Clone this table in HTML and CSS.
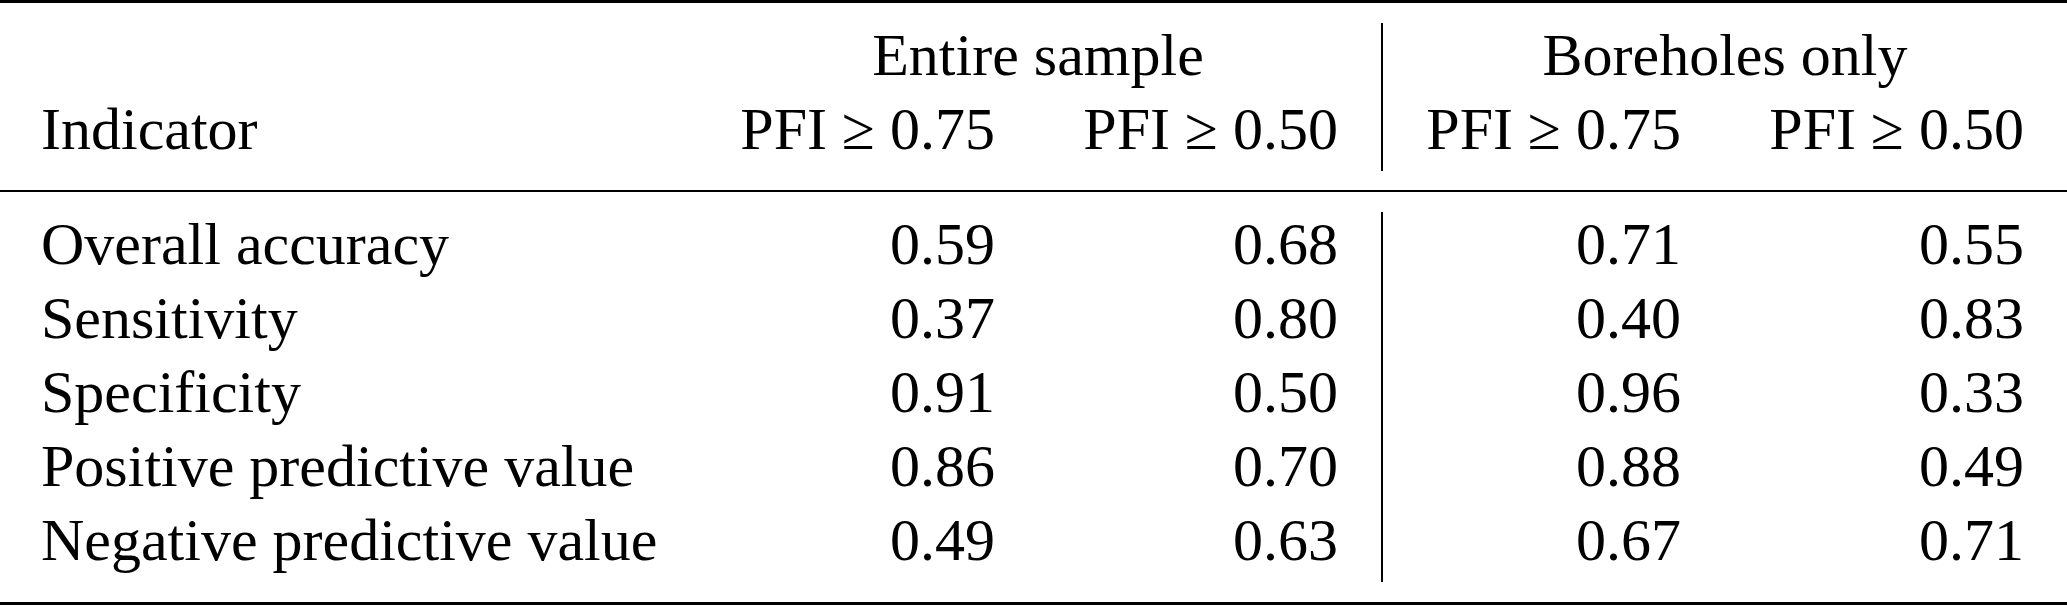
FILE: index.html
```html
<!DOCTYPE html>
<html lang="en">
<head>
<meta charset="utf-8">
<title>Indicator table</title>
<link rel="stylesheet" href="styles.css">
</head>
<body>
<div class="tbl" role="table">
  <div class="rule rule-heavy"></div>
  <div class="section section-head">
    <div class="row" role="row">
      <div class="c c-first"></div>
      <div class="c c-group">Entire sample</div>
      <div class="c c-group c-sep">Boreholes only</div>
    </div>
    <div class="row" role="row">
      <div class="c c-first">Indicator</div>
      <div class="c">PFI ≥ 0.75</div>
      <div class="c">PFI ≥ 0.50</div>
      <div class="c c-sep">PFI ≥ 0.75</div>
      <div class="c">PFI ≥ 0.50</div>
    </div>
  </div>
  <div class="rule rule-light"></div>
  <div class="section section-body">
    <div class="row" role="row">
      <div class="c c-first">Overall accuracy</div>
      <div class="c">0.59</div>
      <div class="c">0.68</div>
      <div class="c c-sep">0.71</div>
      <div class="c">0.55</div>
    </div>
    <div class="row" role="row">
      <div class="c c-first">Sensitivity</div>
      <div class="c">0.37</div>
      <div class="c">0.80</div>
      <div class="c c-sep">0.40</div>
      <div class="c">0.83</div>
    </div>
    <div class="row" role="row">
      <div class="c c-first">Specificity</div>
      <div class="c">0.91</div>
      <div class="c">0.50</div>
      <div class="c c-sep">0.96</div>
      <div class="c">0.33</div>
    </div>
    <div class="row" role="row">
      <div class="c c-first">Positive predictive value</div>
      <div class="c">0.86</div>
      <div class="c">0.70</div>
      <div class="c c-sep">0.88</div>
      <div class="c">0.49</div>
    </div>
    <div class="row" role="row">
      <div class="c c-first">Negative predictive value</div>
      <div class="c">0.49</div>
      <div class="c">0.63</div>
      <div class="c c-sep">0.67</div>
      <div class="c">0.71</div>
    </div>
  </div>
  <div class="rule rule-heavy"></div>
</div>
</body>
</html>
```

FILE: styles.css
```css
* {
  box-sizing: border-box;
}

html, body {
  margin: 0;
  padding: 0;
  background: #ffffff;
}

body {
  font-family: "Liberation Serif", "Times New Roman", serif;
  font-size: 60px;
  color: #000000;
}

.tbl {
  width: 2067px;
  display: flex;
  flex-direction: column;
}

.rule {
  background: #000000;
  width: 100%;
}

.rule-heavy {
  height: 3px;
}

.rule-light {
  height: 2px;
}

.section-head {
  padding: 20px 0 19px;
}

.section-body {
  padding: 20px 0 20px;
}

.row {
  display: grid;
  grid-template-columns: 695px 343px 343px 343px 343px;
  height: 74px;
}

.c {
  padding: 0 43px 10px;
  line-height: 64px;
  text-align: right;
  white-space: nowrap;
}

.c-first {
  padding-left: 41px;
  text-align: left;
}

.c-group {
  grid-column: span 2;
  text-align: center;
}

.c-sep {
  border-left: 2px solid #000000;
}
```
